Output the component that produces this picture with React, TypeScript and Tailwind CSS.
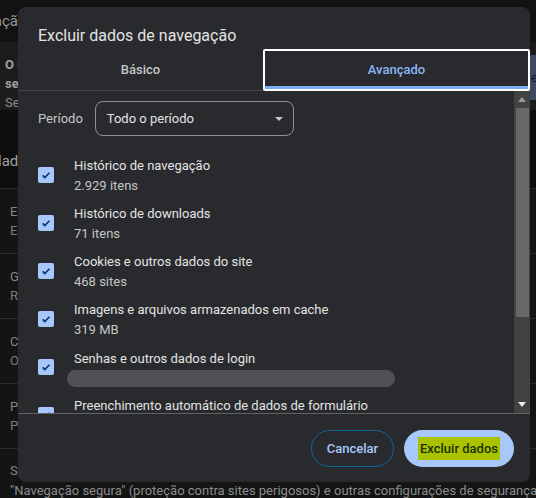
import React from "react";

const font = "font-['Roboto','Liberation_Sans',sans-serif]";

type Item = { title: string; sub?: string; loading?: boolean };

const items: Item[] = [
  { title: "Histórico de navegação", sub: "2.929 itens" },
  { title: "Histórico de downloads", sub: "71 itens" },
  { title: "Cookies e outros dados do site", sub: "468 sites" },
  { title: "Imagens e arquivos armazenados em cache", sub: "319 MB" },
  { title: "Senhas e outros dados de login", loading: true },
  { title: "Preenchimento automático de dados de formulário", sub: "1 endereço" },
];

const rows = [
  ["Excluir dados de navegação", "Exclui histórico, cookies, cache e muito mais"],
  ["Guia de privacidade", "Revise os principais controles de privacidade e segurança"],
  ["Cookies de terceiros", "Os cookies de terceiros estão bloqueados no modo anônimo"],
  ["Privacidade em anúncios", "Personalize as informações usadas pelos sites"],
];

function Check() {
  return (
    <span className="flex h-4 w-4 shrink-0 items-center justify-center rounded-[2px] bg-[#a8c7fa]">
      <svg viewBox="0 0 16 16" className="h-4 w-4">
        <path d="M4.6 8.4l2.2 2.2 4.6-4.8" fill="none" stroke="#062e6f" strokeWidth="1.5" />
      </svg>
    </span>
  );
}

function Background() {
  return (
    <div className="flex h-full flex-col text-[13px] text-[#858585]">
      <div className="flex h-[42px] shrink-0 items-center overflow-hidden bg-[#121213] text-[15px] text-[#9a9a9a]">
        <span className="-ml-[58px] whitespace-nowrap">Combinação</span>
      </div>
      <div className="flex h-[68px] shrink-0 justify-between overflow-hidden bg-[#1c1c1d] pl-[5px]">
        <div className="flex flex-col pt-[13px] leading-[19px]">
          <span className="font-bold text-[#a0a0a0]">O Chrome pode ajudar a manter você</span>
          <span className="font-bold text-[#a0a0a0]">seguro contra violações de dados</span>
          <span className="text-[#8a8a8a]">Senhas verificadas</span>
        </div>
        <div className="-mr-[54px] mt-[13px] flex h-[45px] w-[60px] shrink-0 items-center bg-[#3d4b62] pl-[1px] text-[#0e1c30]">
          e
        </div>
      </div>
      <div className="flex h-[78px] shrink-0 items-end overflow-hidden pb-[16px] text-[15px] text-[#a0a0a0]">
        <span className="-ml-[2px] whitespace-nowrap">lade e segurança</span>
      </div>
      <div className="flex flex-1 flex-col bg-[#141415]">
        {rows.map(([a, b]) => (
          <div key={a} className="flex h-[65px] shrink-0 flex-col justify-center border-t border-[#2a2b2c] pl-[10px] leading-[19px]">
            <span>{a}</span>
            <span className="text-[#7c7c7c]">{b}</span>
          </div>
        ))}
        <div className="flex flex-col border-t border-[#2a2b2c] pl-[10px] pt-[12px] leading-[20px]">
          <span>Segurança</span>
          <span className="whitespace-nowrap text-[#8c8c8c]">
            "Navegação segura" (proteção contra sites perigosos) e outras configurações de segurança
          </span>
        </div>
      </div>
    </div>
  );
}

function Scrollbar() {
  return (
    <div className="flex w-[16px] shrink-0 flex-col items-center bg-[#424242]">
      <div className="flex h-[17px] items-center justify-center">
        <svg viewBox="0 0 8 5" className="h-[5px] w-[8px]">
          <path d="M0 5L4 0L8 5Z" fill="#9a9a9a" />
        </svg>
      </div>
      <div className="h-[209px] w-[13px] bg-[#686868]" />
      <div className="flex-1" />
      <div className="flex h-[17px] items-center justify-center">
        <svg viewBox="0 0 8 5" className="h-[5px] w-[8px]">
          <path d="M0 0L8 0L4 5Z" fill="#e8e8e8" />
        </svg>
      </div>
    </div>
  );
}

export default function App() {
  return (
    <div className={`relative h-[498px] w-[536px] overflow-hidden bg-[#0e0e0f] ${font}`}>
      <Background />

      <div className="absolute left-[18px] top-[7px] flex h-[475px] w-[512px] flex-col overflow-hidden rounded-[8px] bg-[#292a2d]">
        <div className="h-[42px] shrink-0 px-[20px] pt-[19px] text-[16px] leading-[20px] text-[#e3e3e3]">
          Excluir dados de navegação
        </div>

        <div className="flex h-[42px] shrink-0 border-b border-[#46474a] pt-[1px] text-[13px] font-medium">
          <div className="flex w-[245px] items-center justify-center text-[#c4c7c5]">Básico</div>
          <div className="relative flex flex-1 items-center justify-center text-[#8ab4f8]">
            Avançado
            <span className="absolute inset-x-0 -top-[1px] -bottom-[1px] rounded-[2px] border-2 border-white" />
            <span className="absolute inset-x-[2px] bottom-[1px] h-[3px] bg-[#7cacf8]" />
          </div>
        </div>

        <div className="flex h-[322px] shrink-0">
          <div className="flex flex-1 flex-col overflow-hidden pl-[20px] pt-[10px]">
            <div className="flex h-[35px] shrink-0 items-center gap-[12px] text-[13px]">
              <span className="text-[#c4c7c5]">Período</span>
              <div className="flex h-[35px] w-[199px] items-center justify-between rounded-[8px] border border-[#8e918f] pl-[11px] pr-[10px] text-[#e3e3e3]">
                <span className="pt-[1px]">Todo o período</span>
                <svg viewBox="0 0 8 4" className="h-[4px] w-[8px]">
                  <path d="M0 0L8 0L4 4Z" fill="#c4c7c5" />
                </svg>
              </div>
            </div>

            <div className="mt-[15px] flex flex-col">
              {items.map((it) => (
                <div key={it.title} className="flex h-[48px] shrink-0 items-center gap-[20px]">
                  <Check />
                  <div className="flex flex-1 flex-col pt-[2px] text-[13px] leading-[20px]">
                    <span className="text-[#e3e3e3]">{it.title}</span>
                    {it.loading ? (
                      <span className="-ml-[7px] mt-[1px] h-[17px] w-[328px] rounded-full bg-[#505154]" />
                    ) : (
                      <span className="text-[#c4c7c5]">{it.sub}</span>
                    )}
                  </div>
                </div>
              ))}
            </div>
          </div>
          <Scrollbar />
        </div>

        <div className="flex flex-1 justify-end gap-[10px] border-t border-[#606265] pr-[16px] pt-[16px] text-[13px] font-medium">
          <button className="h-[37px] w-[83px] rounded-full border border-[#0f6694] text-[#a8c7fa]">
            Cancelar
          </button>
          <button className="flex h-[37px] w-[110px] items-center justify-center rounded-full bg-[#a8c7fa]">
            <span className="flex h-[23px] items-center bg-[#a9c300] px-[2px] text-[#1b3000]">
              Excluir dados
            </span>
          </button>
        </div>
      </div>
    </div>
  );
}
